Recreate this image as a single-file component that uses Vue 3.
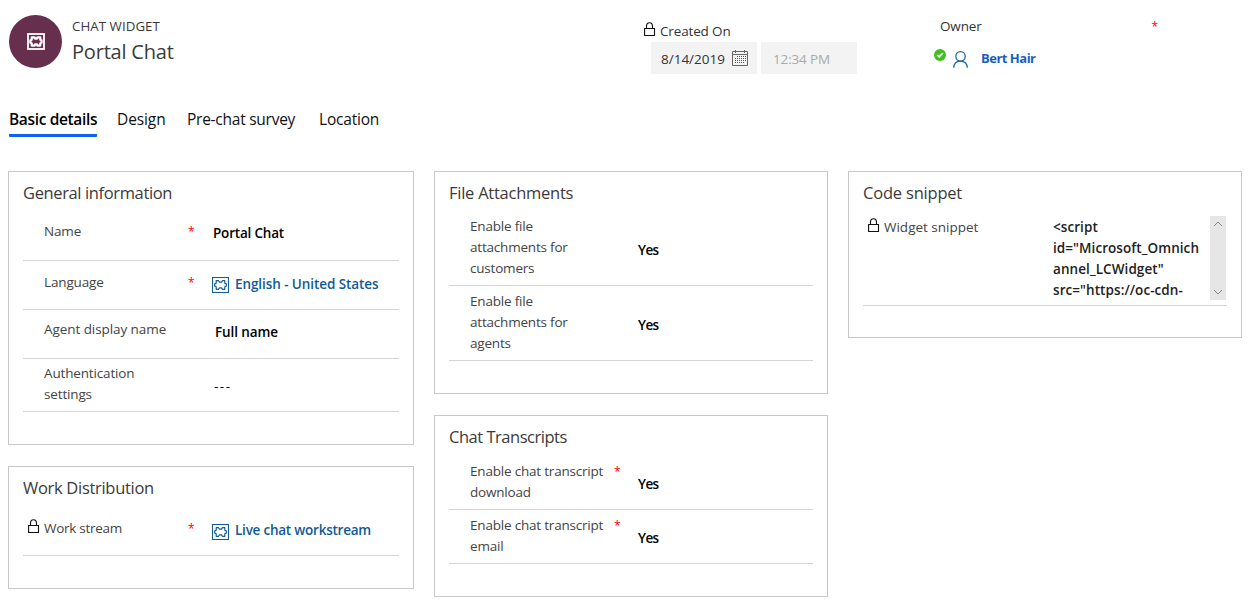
<script setup>
const tabs = [
  { label: 'Basic details', key: 'basic', active: true },
  { label: 'Design', key: 'design' },
  { label: 'Pre-chat survey', key: 'survey' },
  { label: 'Location', key: 'location' },
]

const columns = [
  {
    key: 'left',
    cards: [
      {
        title: 'General information', key: 'general',
        fields: [
          { key: 'name', label: ['Name'], required: true, value: 'Portal Chat' },
          { key: 'language', label: ['Language'], required: true, value: 'English - United States', link: true },
          { key: 'agent', label: ['Agent display name'], value: 'Full name' },
          { key: 'auth', label: ['Authentication', 'settings'], value: '---' },
        ],
      },
      {
        title: 'Work Distribution', key: 'work',
        fields: [
          { key: 'stream', label: ['Work stream'], locked: true, required: true, value: 'Live chat workstream', link: true },
        ],
      },
    ],
  },
  {
    key: 'middle',
    cards: [
      {
        title: 'File Attachments', key: 'files',
        fields: [
          { key: 'customers', label: ['Enable file', 'attachments for', 'customers'], value: 'Yes' },
          { key: 'agents', label: ['Enable file', 'attachments for', 'agents'], value: 'Yes' },
        ],
      },
      {
        title: 'Chat Transcripts', key: 'transcripts',
        fields: [
          { key: 'download', label: ['Enable chat transcript', 'download'], required: true, value: 'Yes' },
          { key: 'email', label: ['Enable chat transcript', 'email'], required: true, value: 'Yes' },
        ],
      },
    ],
  },
  {
    key: 'right',
    cards: [
      {
        title: 'Code snippet', key: 'embed',
        fields: [
          {
            key: 'snippet', label: ['Widget snippet'], locked: true,
            lines: ['<script', 'id="Microsoft_Omnich', 'annel_LCWidget"', 'src="https://oc-cdn-'],
          },
        ],
      },
    ],
  },
]
</script>

<template>
  <main class="page">
    <header class="header">
      <div class="avatar">
        <svg width="18" height="17" viewBox="0 0 18 17">
          <rect x="1" y="1" width="16" height="15" fill="none" stroke="#fff" stroke-width="1.8" />
          <path d="M4.7 4.4H7.6L8 5.6H10L10.4 4.4H13.3V6.8L14.6 7.2V9.8L13.3 10.2V12.6H10.4L10 11.4H8L7.6 12.6H4.7V10.2L3.4 9.8V7.2L4.7 6.8Z" fill="none" stroke="#fff" stroke-width="2.2" stroke-linejoin="round" />
        </svg>
      </div>
      <div class="heading">
        <div class="entity"><span>CHAT WIDGET</span></div>
        <h1>Portal Chat</h1>
      </div>
      <div class="created">
        <div class="created-label">
          <svg class="lock" width="12" height="15" viewBox="0 0 12 15">
            <path d="M.6 6.5H10.5V13.5H.6ZM2.5 6.5V4.2C2.5 -.4 8.5 -.4 8.5 4.2V6.5" fill="none" stroke="#111" stroke-width="1.1" />
          </svg>
          <span>Created On</span>
        </div>
        <div class="stamp">
          <div class="date">
            <span>8/14/2019</span>
            <svg width="17" height="16" viewBox="0 0 17 16">
              <path d="M.5 1.5H15.5V15.5H.5ZM.5 4.5H15.5M3.5 0V3M12.5 0V3" fill="none" stroke="#666" />
              <path d="M5 6.5H14M3 8.5H14M3 10.5H14M3 12.5H12" fill="none" stroke="#555" stroke-dasharray="1 1" />
            </svg>
          </div>
          <div class="time"><span>12:34 PM</span></div>
        </div>
      </div>
      <div class="owner">
        <div class="owner-label"><span>Owner</span><i class="star">*</i></div>
        <div class="owner-value">
          <svg class="presence" width="12" height="12" viewBox="0 0 12 12">
            <circle cx="6" cy="6" r="6" fill="#3fbf20" />
            <path d="M3.2 6L5.2 7.9L8.8 4.2" fill="none" stroke="#fff" stroke-width="1.7" />
          </svg>
          <svg class="person" width="15" height="17" viewBox="0 0 15 17">
            <circle cx="7.5" cy="5.4" r="4.7" fill="none" stroke="#1d68a7" stroke-width="1.3" />
            <path d="M.7 16.8C.9 12.6 3.4 10.1 7.5 10.1S14.1 12.6 14.3 16.8" fill="none" stroke="#1d68a7" stroke-width="1.3" />
          </svg>
          <b>Bert Hair</b>
        </div>
      </div>
    </header>

    <nav class="tabs">
      <a v-for="t in tabs" :key="t.key" class="tab" :class="['tab-' + t.key, { active: t.active }]"><span>{{ t.label }}</span></a>
    </nav>

    <div class="columns">
      <div v-for="col in columns" :key="col.key" class="column" :class="col.key">
        <section v-for="card in col.cards" :key="card.key" class="card" :class="card.key">
          <h2>{{ card.title }}</h2>
          <div v-for="f in card.fields" :key="f.key" class="field" :class="'f-' + f.key">
            <div class="mark">
              <svg v-if="f.locked" class="lock" width="12" height="15" viewBox="0 0 12 15">
                <path d="M.6 6.5H10.5V13.5H.6ZM2.5 6.5V4.2C2.5 -.4 8.5 -.4 8.5 4.2V6.5" fill="none" stroke="#111" stroke-width="1.1" />
              </svg>
            </div>
            <div class="label">
              <div v-for="line in f.label" :key="line">{{ line }}</div>
            </div>
            <i class="star">{{ f.required ? '*' : '' }}</i>
            <div v-if="f.lines" class="value script">
              <div class="lines"><div v-for="line in f.lines" :key="line">{{ line }}</div></div>
              <div class="scroll">
                <svg width="10" height="6" viewBox="0 0 10 6"><path d="M1 5L5 1L9 5" fill="none" stroke="#888" /></svg>
                <svg width="10" height="6" viewBox="0 0 10 6"><path d="M1 1L5 5L9 1" fill="none" stroke="#888" /></svg>
              </div>
            </div>
            <div v-else class="value" :class="{ link: f.link }">
              <svg v-if="f.link" class="puzzle" width="17" height="16" viewBox="0 0 17 16">
                <rect x=".5" y=".5" width="16" height="15" fill="none" stroke="#125c9b" stroke-width="1.1" />
                <path d="M4.2 3.7H6.6L7.4 5.1H9.6L10.4 3.7H12.8V6.3L14.3 6.9V9.1L12.8 9.7V12.3H10.4L9.6 10.9H7.4L6.6 12.3H4.2V9.7L2.7 9.1V6.9L4.2 6.3Z" fill="none" stroke="#125c9b" stroke-width="1.2" stroke-linejoin="round" />
              </svg>
              <span>{{ f.value }}</span>
            </div>
          </div>
        </section>
      </div>
    </div>
  </main>
</template>

<style>
body { margin: 0; background: #fff; }
</style>

<style scoped>
.page {
  box-sizing: border-box;
  width: 1253px;
  height: 614px;
  overflow: hidden;
  font-family: "Open Sans", "Noto Sans", sans-serif;
  font-size: 13.5px;
  line-height: 21px;
  letter-spacing: -0.15px;
  color: #444;
  white-space: nowrap;
}
svg { display: block; flex: none; }
.header { display: flex; height: 100px; }
.avatar {
  display: flex; align-items: center; justify-content: center;
  width: 53px; height: 53px; margin: 15px 0 0 9px;
  border-radius: 50%; background: #662f4d;
}
.heading { width: 572px; padding: 16px 0 0 10px; box-sizing: border-box; color: #3b3a39; }
.entity { letter-spacing: 0.05px; }
.entity span { font-size: 13.3px; }
h1 { margin: 0; font-size: 20px; line-height: 30px; font-weight: 400; letter-spacing: -0.2px; }
.created { width: 300px; padding: 21px 0 0 10px; box-sizing: border-box; }
.created-label { display: flex; gap: 4px; color: #333; }
.created-label .lock { margin-top: 1px; }
.stamp { display: flex; gap: 4px; margin: 0 0 0 7px; }
.date, .time { display: flex; align-items: center; height: 32px; box-sizing: border-box; background: #f3f3f3; padding-top: 2px; }
.date { width: 106px; padding-left: 10px; gap: 7px; color: #333; letter-spacing: 0; }
.date svg { margin-top: -3px; }
.time { width: 96px; padding-left: 12px; color: #aaa; }
.owner { padding-top: 16px; }
.owner-label { display: flex; justify-content: space-between; width: 218px; padding-left: 6px; color: #333; }
.owner-value { display: flex; margin-top: 12px; }
.person { margin: 2px 0 0 7px; }
.owner-value b { margin: -1px 0 0 13px; color: #155fc0; font-weight: 700; font-size: 13px; letter-spacing: -0.5px; }
.star { font-style: normal; color: #f00; font-size: 12px; }
.tabs { display: flex; height: 71px; padding-left: 9px; font-size: 15.5px; color: #111; letter-spacing: -0.2px; }
.tab { box-sizing: border-box; height: 37px; padding-top: 9px; }
.tab-basic { width: 88px; margin-right: 20px; }
.tab-design { width: 49px; margin-right: 21px; letter-spacing: -0.1px; }
.tab-survey { width: 109px; margin-right: 23px; letter-spacing: -0.25px; }
.tab.active { border-bottom: 3px solid #0b63f6; border-radius: 1px; font-weight: 600; color: #000; letter-spacing: -0.35px; }
.columns { display: flex; align-items: flex-start; padding-left: 8px; gap: 20px; }
.column { display: flex; flex-direction: column; gap: 21px; width: 394px; }
.left { width: 406px; }
.card { box-sizing: border-box; border: 1px solid #c8c8c8; padding: 0 14px 32px; }
.embed { padding-bottom: 31px; }
h2 { margin: 0; height: 38px; line-height: 42px; font-size: 16.5px; font-weight: 400; color: #3b3a39; letter-spacing: -0.3px; }
.general h2 { letter-spacing: -0.37px; }
.files h2 { letter-spacing: -0.25px; }
.transcripts h2 { letter-spacing: -0.48px; }
.embed h2 { letter-spacing: -0.2px; }
.field { display: flex; box-sizing: border-box; border-bottom: 1px solid #d4d4d4; }
.mark { flex: none; width: 21px; box-sizing: border-box; padding-left: 5px; }
.mark .lock { margin-top: 1px; }
.label { flex: none; width: 144px; }
.star { flex: none; width: 24px; }
.files .label, .transcripts .label { letter-spacing: -0.2px; }
.owner .star { width: auto; }
.value { display: flex; color: #000; font-weight: 600; letter-spacing: -0.2px; }
.link { color: #0f5a98; letter-spacing: -0.08px; }
.puzzle { margin: 3px 6px 0 0; }

.f-name { height: 51px; padding-top: 11px; }
.f-name .value { margin: 2px 0 0 1px; }
.f-language { height: 49px; padding-top: 11px; }
.f-language .value { margin-top: 2px; }
.f-agent { height: 49px; padding-top: 9px; }
.f-agent .label { letter-spacing: -0.07px; }
.f-agent .value { margin: 3px 0 0 3px; letter-spacing: -0.1px; }
.f-auth { height: 53px; padding-top: 4px; }
.f-auth .value { margin: 13px 0 0 2px; font-weight: 400; letter-spacing: 1.5px; }
.f-stream { height: 51px; padding-top: 13px; }
.f-stream .label { letter-spacing: -0.28px; }
.f-stream .value { margin-top: 2px; letter-spacing: -0.23px; }
.f-stream .puzzle { margin-top: 4px; }
.f-customers { height: 76px; padding-top: 6px; }
.f-agents { height: 75px; padding-top: 5px; }
.files .value { margin-top: 24px; letter-spacing: -0.6px; }
.f-download { height: 56px; padding-top: 7px; }
.f-email { height: 54px; padding-top: 5px; }
.transcripts .value { margin-top: 13px; letter-spacing: -0.6px; }
.f-snippet { height: 96px; padding-top: 6px; }
.f-snippet .mark, .f-snippet .label { padding-top: 1px; }
.f-snippet .label { letter-spacing: 0; }
.value.script { color: #222; letter-spacing: 0.07px; }
.lines { width: 158px; padding: 1px 0 0 1px; box-sizing: border-box; }
.scroll {
  display: flex; flex-direction: column; align-items: center; justify-content: space-between;
  box-sizing: border-box; width: 16px; height: 84px; padding: 5px 0; background: #e6e6e6;
}
</style>
